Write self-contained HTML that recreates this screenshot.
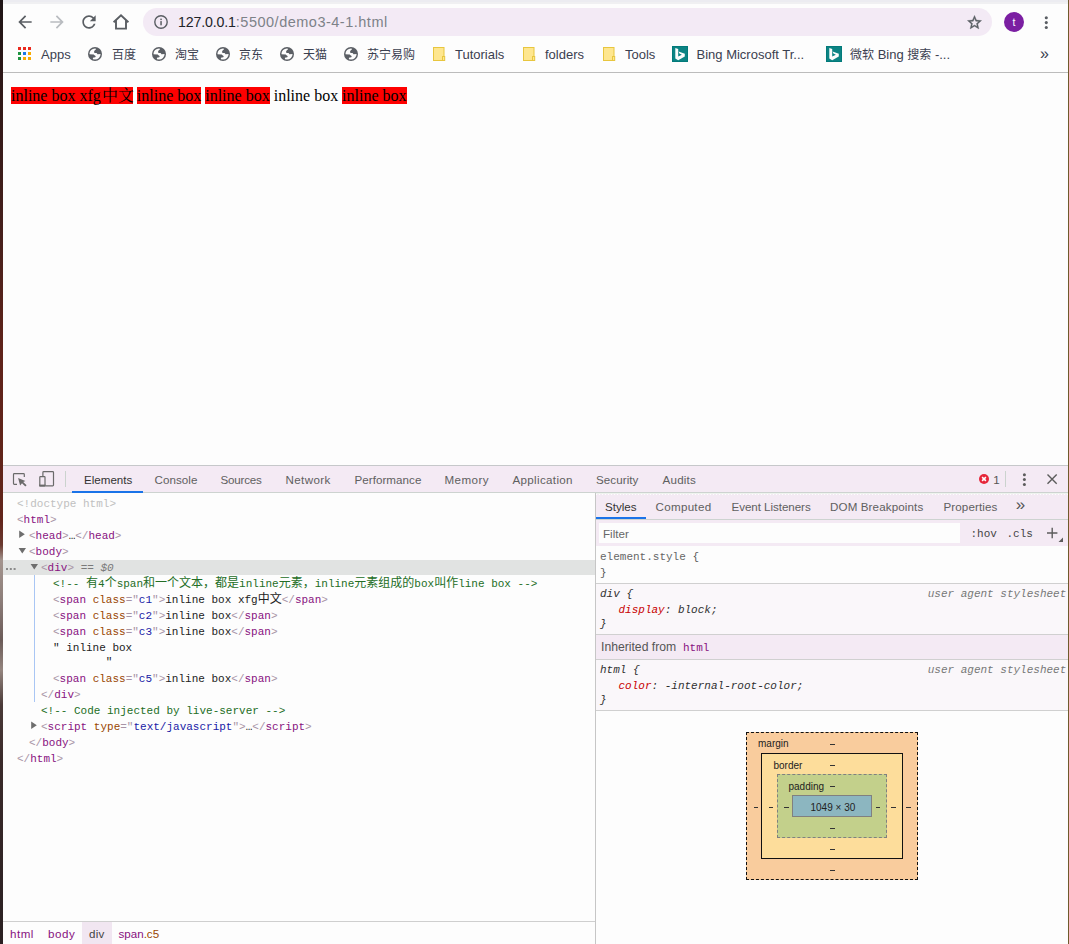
<!DOCTYPE html>
<html><head><meta charset="utf-8"><title>demo3-4-1</title>
<style>
html,body{margin:0;padding:0;overflow:hidden}
body{width:1069px;height:944px;overflow:hidden;background:#fdfdfd;position:relative;
 font-family:"Liberation Sans","Noto Sans CJK SC",sans-serif;font-size:12px;color:#333}
.a{position:absolute;white-space:nowrap}
svg{overflow:visible}
.ui{font-family:"Liberation Sans",sans-serif}
.mono{font-family:"Liberation Mono",monospace;font-size:11px}
.bm{position:absolute;top:47px;height:16px;line-height:16px;font-size:12px;color:#3b4050;white-space:nowrap}
.tab{position:absolute;top:472px;height:16px;line-height:16px;font-size:12px;color:#4a4a4a;white-space:nowrap}
.stab{position:absolute;top:499px;height:16px;line-height:16px;font-size:12px;color:#4a4a4a;white-space:nowrap}
.ln{position:absolute;height:16px;line-height:16px;white-space:nowrap;font-family:"Liberation Mono","Noto Sans CJK SC",monospace;font-size:11px;color:#222}
.t{color:#881280}.p{color:#a894a6}.an{color:#994500}.av{color:#1a1aa6}.cm{color:#236e25}.g{color:#c0c0c0}
.red{position:absolute;top:87px;height:17px;background:#fe0000}
.pg{position:absolute;top:87px;height:17px;line-height:17px;font-family:"Liberation Serif","Noto Serif CJK SC",serif;font-size:16px;color:#000;white-space:nowrap}
.sl{position:absolute;height:16px;line-height:16px;white-space:nowrap;font-family:"Liberation Mono",monospace;font-size:11px;color:#303030}
.it{font-style:italic}
.bx{position:absolute;box-sizing:border-box}
.bl{position:absolute;font-size:10px;line-height:12px;height:12px;color:#222;white-space:nowrap}
.cj{font-size:12px}
</style></head><body>
<div class="a" style="left:0;top:0;width:3px;height:944px;background:linear-gradient(180deg,#1e1517 0px,#2a1717 60px,#47201c 236px,#5f231a 350px,#62251b 520px,#6a3a30 545px,#a3948e 560px,#8d7e7a 600px,#6b5b58 640px,#94857f 670px,#4a3a38 705px,#3a2a2a 760px,#2a2022 944px)"></div>
<div class="a" style="left:1067.6px;top:0;width:1.4px;height:944px;background:#6f5b2c"></div>
<div class="a" style="left:3px;top:0;width:1065px;height:2px;background:#ececf1"></div>
<div class="a" style="left:3px;top:2px;width:1065px;height:2px;background:#f0f0f2"></div>
<svg class="a" style="left:14.9px;top:11.9px" width="20" height="20" viewBox="0 0 24 24"><path fill="#5a5e63" d="M20 11H7.83l5.59-5.59L12 4l-8 8 8 8 1.41-1.41L7.83 13H20v-2z"/></svg>
<svg class="a" style="left:47px;top:11.9px" width="20" height="20" viewBox="0 0 24 24"><path fill="#b9bcc0" d="M4 11h12.17l-5.59-5.59L12 4l8 8-8 8-1.41-1.41L16.17 13H4v-2z"/></svg>
<svg class="a" style="left:79.2px;top:11.7px" width="20" height="20" viewBox="0 0 24 24"><path fill="#5a5e63" d="M17.65 6.35C16.2 4.9 14.21 4 12 4c-4.42 0-7.99 3.58-7.99 8s3.57 8 7.99 8c3.73 0 6.84-2.55 7.73-6h-2.08c-.82 2.33-3.04 4-5.65 4-3.31 0-6-2.69-6-6s2.69-6 6-6c1.66 0 3.14.69 4.22 1.78L13 11h7V4l-2.35 2.35z"/></svg>
<svg class="a" style="left:111px;top:12px" width="20" height="20" viewBox="0 0 20 20"><path fill="none" stroke="#5a5e63" stroke-width="1.9" stroke-linejoin="miter" d="M2.6 10.2 L10 3.3 L17.4 10.2 M5 8.6 V16.6 H15 V8.6"/></svg>
<div class="a" style="left:143px;top:8px;width:849px;height:28px;border-radius:14px;background:#f3eaf5"></div>
<svg class="a" style="left:153px;top:14px" width="16" height="16" viewBox="0 0 16 16"><circle cx="8" cy="8" r="6.2" fill="none" stroke="#5a5e63" stroke-width="1.4"/><rect x="7.3" y="7.1" width="1.5" height="4.2" fill="#5a5e63"/><rect x="7.3" y="4.6" width="1.5" height="1.5" fill="#5a5e63"/></svg>
<div class="a ui" style="left:178px;top:12px;height:20px;line-height:20px;font-size:14.5px;letter-spacing:0.5px;color:#7d8288"><span style="color:#222428;font-size:14.2px;letter-spacing:-0.15px">127.0.0.1</span>:5500/demo3-4-1.html</div>
<svg class="a" style="left:965.6px;top:14px" width="17" height="17" viewBox="0 0 24 24"><path fill="#5a5e63" stroke="#5a5e63" stroke-width="0.5" d="M22 9.24l-7.19-.62L12 2 9.19 8.63 2 9.24l5.46 4.73L5.82 21 12 17.27 18.18 21l-1.63-7.03L22 9.24zM12 15.4l-3.76 2.27 1-4.28-3.32-2.88 4.38-.38L12 6.1l1.71 4.04 4.38.38-3.32 2.88 1 4.28L12 15.4z"/></svg>
<div class="a" style="left:1004px;top:12px;width:20px;height:20px;border-radius:10px;background:#7b1fa2"></div>
<div class="a ui" style="left:1004px;top:12px;width:20px;height:20px;line-height:20px;text-align:center;font-size:10.5px;color:#fff">t</div>
<svg class="a" style="left:1043px;top:14px" width="7" height="16" viewBox="0 0 7 16"><circle cx="3.3" cy="3.7" r="1.55" fill="#5a5e63"/><circle cx="3.3" cy="8.6" r="1.55" fill="#5a5e63"/><circle cx="3.3" cy="13.5" r="1.55" fill="#5a5e63"/></svg>
<svg class="a" style="left:18px;top:47px" width="13" height="13" viewBox="0 0 13 13" shape-rendering="crispEdges"><rect x="0" y="0" width="3" height="3" fill="#ea2a1e"/><rect x="5" y="0" width="3" height="3" fill="#ea2a1e"/><rect x="10" y="0" width="3" height="3" fill="#ea2a1e"/><rect x="0" y="5" width="3" height="3" fill="#1e9440"/><rect x="5" y="5" width="3" height="3" fill="#1a78ea"/><rect x="10" y="5" width="3" height="3" fill="#f9ab00"/><rect x="0" y="10" width="3" height="3" fill="#1e9440"/><rect x="5" y="10" width="3" height="3" fill="#f9ab00"/><rect x="10" y="10" width="3" height="3" fill="#f9ab00"/></svg>
<div class="bm" style="left:41px;font-size:13px">Apps</div>
<svg class="a" style="left:88px;top:47px" width="14" height="14" viewBox="0 0 14 14"><circle cx="7" cy="7" r="7" fill="#5b5f65"/><path fill="#fdfdfd" style="clip-path:circle(5.55px at 7px 7px)" d="M0 7.2 L5.8 7.4 Q6.1 8 6.5 8.3 Q7.4 8.7 7.6 9.2 Q7.8 10 7.2 10.3 Q6 10.4 4.9 10.8 L4.9 14 H14 V7.1 L9.4 7.2 Q9.2 6.4 8.5 6.1 L6.6 5.9 Q6 5.5 6.1 4.5 Q6.6 3.2 7.9 2.5 L7.8 0 H0 Z"/></svg>
<div class="bm" style="left:112px">百度</div>
<svg class="a" style="left:152px;top:47px" width="14" height="14" viewBox="0 0 14 14"><circle cx="7" cy="7" r="7" fill="#5b5f65"/><path fill="#fdfdfd" style="clip-path:circle(5.55px at 7px 7px)" d="M0 7.2 L5.8 7.4 Q6.1 8 6.5 8.3 Q7.4 8.7 7.6 9.2 Q7.8 10 7.2 10.3 Q6 10.4 4.9 10.8 L4.9 14 H14 V7.1 L9.4 7.2 Q9.2 6.4 8.5 6.1 L6.6 5.9 Q6 5.5 6.1 4.5 Q6.6 3.2 7.9 2.5 L7.8 0 H0 Z"/></svg>
<div class="bm" style="left:175px">淘宝</div>
<svg class="a" style="left:216px;top:47px" width="14" height="14" viewBox="0 0 14 14"><circle cx="7" cy="7" r="7" fill="#5b5f65"/><path fill="#fdfdfd" style="clip-path:circle(5.55px at 7px 7px)" d="M0 7.2 L5.8 7.4 Q6.1 8 6.5 8.3 Q7.4 8.7 7.6 9.2 Q7.8 10 7.2 10.3 Q6 10.4 4.9 10.8 L4.9 14 H14 V7.1 L9.4 7.2 Q9.2 6.4 8.5 6.1 L6.6 5.9 Q6 5.5 6.1 4.5 Q6.6 3.2 7.9 2.5 L7.8 0 H0 Z"/></svg>
<div class="bm" style="left:239px">京东</div>
<svg class="a" style="left:280px;top:47px" width="14" height="14" viewBox="0 0 14 14"><circle cx="7" cy="7" r="7" fill="#5b5f65"/><path fill="#fdfdfd" style="clip-path:circle(5.55px at 7px 7px)" d="M0 7.2 L5.8 7.4 Q6.1 8 6.5 8.3 Q7.4 8.7 7.6 9.2 Q7.8 10 7.2 10.3 Q6 10.4 4.9 10.8 L4.9 14 H14 V7.1 L9.4 7.2 Q9.2 6.4 8.5 6.1 L6.6 5.9 Q6 5.5 6.1 4.5 Q6.6 3.2 7.9 2.5 L7.8 0 H0 Z"/></svg>
<div class="bm" style="left:303px">天猫</div>
<svg class="a" style="left:344px;top:47px" width="14" height="14" viewBox="0 0 14 14"><circle cx="7" cy="7" r="7" fill="#5b5f65"/><path fill="#fdfdfd" style="clip-path:circle(5.55px at 7px 7px)" d="M0 7.2 L5.8 7.4 Q6.1 8 6.5 8.3 Q7.4 8.7 7.6 9.2 Q7.8 10 7.2 10.3 Q6 10.4 4.9 10.8 L4.9 14 H14 V7.1 L9.4 7.2 Q9.2 6.4 8.5 6.1 L6.6 5.9 Q6 5.5 6.1 4.5 Q6.6 3.2 7.9 2.5 L7.8 0 H0 Z"/></svg>
<div class="bm" style="left:367px">苏宁易购</div>
<svg class="a" style="left:433px;top:47px" width="13" height="15" viewBox="0 0 13 15"><rect x="0.5" y="0.5" width="10.5" height="13" fill="#fee68f" stroke="#e8c63e" stroke-width="1"/><rect x="9.5" y="9.5" width="2.2" height="4" fill="#fee68f" stroke="#e8c63e" stroke-width="1"/></svg>
<div class="bm" style="left:455px;font-size:13px">Tutorials</div>
<svg class="a" style="left:523px;top:47px" width="13" height="15" viewBox="0 0 13 15"><rect x="0.5" y="0.5" width="10.5" height="13" fill="#fee68f" stroke="#e8c63e" stroke-width="1"/><rect x="9.5" y="9.5" width="2.2" height="4" fill="#fee68f" stroke="#e8c63e" stroke-width="1"/></svg>
<div class="bm" style="left:545px;font-size:13px">folders</div>
<svg class="a" style="left:603px;top:47px" width="13" height="15" viewBox="0 0 13 15"><rect x="0.5" y="0.5" width="10.5" height="13" fill="#fee68f" stroke="#e8c63e" stroke-width="1"/><rect x="9.5" y="9.5" width="2.2" height="4" fill="#fee68f" stroke="#e8c63e" stroke-width="1"/></svg>
<div class="bm" style="left:625px;font-size:13px">Tools</div>
<svg class="a" style="left:672px;top:46px" width="16" height="16" viewBox="0 0 16 16"><rect x="0" y="0" width="16" height="16" fill="#0c8484"/><rect x="0.5" y="0.5" width="15" height="15" fill="none" stroke="#027a7a"/><path fill="#fdfdfd" d="M3.3 2 L6.2 3 V10.6 L9.9 8.8 L7.4 7.6 L6.6 5.4 L12.8 7.7 V10.5 L6.2 14.2 L3.3 12.5 Z"/></svg>
<div class="bm" style="left:696.5px;font-size:13px">Bing Microsoft Tr...</div>
<svg class="a" style="left:826px;top:46px" width="16" height="16" viewBox="0 0 16 16"><rect x="0" y="0" width="16" height="16" fill="#0c8484"/><rect x="0.5" y="0.5" width="15" height="15" fill="none" stroke="#027a7a"/><path fill="#fdfdfd" d="M3.3 2 L6.2 3 V10.6 L9.9 8.8 L7.4 7.6 L6.6 5.4 L12.8 7.7 V10.5 L6.2 14.2 L3.3 12.5 Z"/></svg>
<div class="bm" style="left:850px;font-size:13px"><span class="cj">微软</span> Bing <span class="cj">搜索</span> -...</div>
<div class="bm" style="left:1040px;font-size:16px;top:45.6px">&raquo;</div>
<div class="a" style="left:3px;top:72px;width:1065px;height:1px;background:#bcbcbc"></div>
<div class="red" style="left:11px;width:122px"></div>
<div class="red" style="left:137px;width:64px"></div>
<div class="red" style="left:205px;width:65px"></div>
<div class="red" style="left:342px;width:65px"></div>
<div class="pg" style="left:11px">inline box xfg</div>
<div class="pg" style="left:102px">中文</div>
<div class="pg" style="left:136.8px">inline box</div>
<div class="pg" style="left:205.2px">inline box</div>
<div class="pg" style="left:273.7px">inline box</div>
<div class="pg" style="left:342.1px">inline box</div>
<div class="a" style="left:3px;top:465px;width:1065px;height:1px;background:#c6c8ca"></div>
<div class="a" style="left:3px;top:466px;width:1065px;height:26px;background:#f4eaf4"></div>
<div class="a" style="left:3px;top:492px;width:1065px;height:1px;background:#cdd3d0"></div>
<svg class="a" style="left:12px;top:472px" width="16" height="16" viewBox="0 0 16 16"><path fill="none" stroke="#6a6a6a" stroke-width="1.2" d="M5 12.3 H2.3 Q1.5 12.3 1.5 11.5 V2.4 Q1.5 1.6 2.3 1.6 H11.5 Q12.3 1.6 12.3 2.4 V5"/><path fill="#6a6a6a" d="M6.1 6.1 L13.4 8.9 L11.2 9.9 L14.6 13.2 L13.3 14.5 L10 11.2 L8.1 13.4 Z"/></svg>
<svg class="a" style="left:38px;top:470px" width="18" height="18" viewBox="0 0 18 18"><path fill="none" stroke="#6a6a6a" stroke-width="1.2" d="M4.9 6.1 V2.4 Q4.9 1.6 5.7 1.6 H14.7 Q15.5 1.6 15.5 2.4 V15.1 Q15.5 15.9 14.7 15.9 H7.6"/><rect x="1.8" y="6.7" width="5.2" height="9.2" rx="0.6" fill="none" stroke="#6a6a6a" stroke-width="1.2"/><rect x="1.2" y="14.6" width="6.4" height="1.9" fill="#6a6a6a"/></svg>
<div class="a" style="left:65px;top:471px;width:1px;height:16px;background:#cbd3ce"></div>
<div class="a" style="left:72px;top:491px;width:71px;height:2px;background:#1a73e8"></div>
<div class="tab" style="left:84px;font-size:11.6px;letter-spacing:0px;color:#333">Elements</div>
<div class="tab" style="left:154.5px;font-size:11.6px;letter-spacing:0.05px;color:#606060">Console</div>
<div class="tab" style="left:220.5px;font-size:11.6px;letter-spacing:-0.2px;color:#606060">Sources</div>
<div class="tab" style="left:285.5px;font-size:11.6px;letter-spacing:0.4px;color:#606060">Network</div>
<div class="tab" style="left:354.5px;font-size:11.6px;letter-spacing:0.05px;color:#606060">Performance</div>
<div class="tab" style="left:444.5px;font-size:11.6px;letter-spacing:0.45px;color:#606060">Memory</div>
<div class="tab" style="left:512.5px;font-size:11.6px;letter-spacing:0.33px;color:#606060">Application</div>
<div class="tab" style="left:596px;font-size:11.6px;letter-spacing:0.07px;color:#606060">Security</div>
<div class="tab" style="left:662.5px;font-size:11.6px;letter-spacing:0.23px;color:#606060">Audits</div>
<svg class="a" style="left:979px;top:474px" width="10" height="10" viewBox="0 0 10 10"><circle cx="5" cy="5" r="5" fill="#e6273a"/><path stroke="#fff" stroke-width="1.5" d="M3.1 3.1 L6.9 6.9 M6.9 3.1 L3.1 6.9"/></svg>
<div class="tab" style="left:993.3px;font-size:11.6px;color:#555">1</div>
<div class="a" style="left:1005px;top:471px;width:1px;height:16px;background:#cbd3ce"></div>
<svg class="a" style="left:1021px;top:472px" width="7" height="15" viewBox="0 0 7 15"><circle cx="3.4" cy="2.7" r="1.5" fill="#5c5c5c"/><circle cx="3.4" cy="7.5" r="1.5" fill="#5c5c5c"/><circle cx="3.4" cy="12.4" r="1.5" fill="#5c5c5c"/></svg>
<svg class="a" style="left:1046px;top:473px" width="12" height="12" viewBox="0 0 12 12"><path stroke="#5c5c5c" stroke-width="1.4" d="M1.5 1.4 L10.7 10.7 M10.7 1.4 L1.5 10.7"/></svg>
<div class="a" style="left:3px;top:560px;width:592px;height:14.8px;background:#e1e3e2"></div>
<div class="a" style="left:34px;top:575px;width:1px;height:126.5px;background:#a9c6f4"></div>
<div class="ln" style="left:17px;top:495.8px;"><span class="g">&lt;!doctype html&gt;</span></div>
<div class="ln" style="left:17px;top:511.8px;"><span class="p">&lt;</span><span class="t">html</span><span class="p">&gt;</span></div>
<svg class="a" style="left:18.2px;top:530px" width="8" height="9" viewBox="0 0 8 9"><path fill="#6e6e6e" d="M1.2 0.6 L6.8 4.3 L1.2 8 Z"/></svg>
<div class="ln" style="left:29px;top:527.8px;"><span class="p">&lt;</span><span class="t">head</span><span class="p">&gt;</span>…<span class="p">&lt;/</span><span class="t">head</span><span class="p">&gt;</span></div>
<svg class="a" style="left:18.2px;top:547px" width="9" height="8" viewBox="0 0 9 8"><path fill="#6e6e6e" d="M0.6 1 L8 1 L4.3 6.6 Z"/></svg>
<div class="ln" style="left:29px;top:543.8px;"><span class="p">&lt;</span><span class="t">body</span><span class="p">&gt;</span></div>
<div class="a" style="left:5.8px;top:567.8px;width:2px;height:2px;background:#8a8a8a;box-shadow:3.8px 0 0 #8a8a8a,7.6px 0 0 #8a8a8a"></div>
<svg class="a" style="left:29.8px;top:563px" width="9" height="8" viewBox="0 0 9 8"><path fill="#6e6e6e" d="M0.6 1 L8 1 L4.3 6.6 Z"/></svg>
<div class="ln" style="left:41px;top:559.8px;"><span class="p">&lt;</span><span class="t">div</span><span class="p">&gt;</span><span style="color:#7a7a7a"> == <i>$0</i></span></div>
<div class="ln" style="left:53px;top:575.8px;"><span class="cm">&lt;!-- <span class="cj">有</span>4<span class="cj">个</span>span<span class="cj">和一个文本，都是</span>inline<span class="cj">元素，</span>inline<span class="cj">元素组成的</span>box<span class="cj">叫作</span>line box --&gt;</span></div>
<div class="ln" style="left:53px;top:591.8px;"><span class="p">&lt;</span><span class="t">span</span> <span class="an">class</span><span class="p">="</span><span class="av">c1</span><span class="p">"</span><span class="p">&gt;</span>inline box xfg<span class="cj">中文</span><span class="p">&lt;/</span><span class="t">span</span><span class="p">&gt;</span></div>
<div class="ln" style="left:53px;top:607.8px;"><span class="p">&lt;</span><span class="t">span</span> <span class="an">class</span><span class="p">="</span><span class="av">c2</span><span class="p">"</span><span class="p">&gt;</span>inline box<span class="p">&lt;/</span><span class="t">span</span><span class="p">&gt;</span></div>
<div class="ln" style="left:53px;top:623.8px;"><span class="p">&lt;</span><span class="t">span</span> <span class="an">class</span><span class="p">="</span><span class="av">c3</span><span class="p">"</span><span class="p">&gt;</span>inline box<span class="p">&lt;/</span><span class="t">span</span><span class="p">&gt;</span></div>
<div class="ln" style="left:53px;top:639.8px;">" inline box</div>
<div class="ln" style="left:53px;top:654.0px;">&nbsp;&nbsp;&nbsp;&nbsp;&nbsp;&nbsp;&nbsp;&nbsp;"</div>
<div class="ln" style="left:53px;top:670.6999999999999px;"><span class="p">&lt;</span><span class="t">span</span> <span class="an">class</span><span class="p">="</span><span class="av">c5</span><span class="p">"</span><span class="p">&gt;</span>inline box<span class="p">&lt;/</span><span class="t">span</span><span class="p">&gt;</span></div>
<div class="ln" style="left:41px;top:686.6999999999999px;"><span class="p">&lt;/</span><span class="t">div</span><span class="p">&gt;</span></div>
<div class="ln" style="left:41px;top:702.6999999999999px;"><span class="cm">&lt;!-- Code injected by live-server --&gt;</span></div>
<svg class="a" style="left:30.2px;top:720.9px" width="8" height="9" viewBox="0 0 8 9"><path fill="#6e6e6e" d="M1.2 0.6 L6.8 4.3 L1.2 8 Z"/></svg>
<div class="ln" style="left:41px;top:718.6999999999999px;"><span class="p">&lt;</span><span class="t">script</span> <span class="an">type</span><span class="p">="</span><span class="av">text/javascript</span><span class="p">"&gt;</span>…<span class="p">&lt;/</span><span class="t">script</span><span class="p">&gt;</span></div>
<div class="ln" style="left:29px;top:734.6999999999999px;"><span class="p">&lt;/</span><span class="t">body</span><span class="p">&gt;</span></div>
<div class="ln" style="left:17px;top:750.6999999999999px;"><span class="p">&lt;/</span><span class="t">html</span><span class="p">&gt;</span></div>
<div class="a" style="left:3px;top:921px;width:592px;height:1px;background:#cfcfcf"></div>
<div class="a" style="left:82px;top:922px;width:30px;height:22px;background:#f1e6f1"></div>
<div class="a ui" style="left:10px;top:926px;height:16px;line-height:16px;font-size:11.6px;letter-spacing:0.5px;color:#881280">html</div>
<div class="a ui" style="left:48px;top:926px;height:16px;line-height:16px;font-size:11.6px;letter-spacing:0.55px;color:#881280">body</div>
<div class="a ui" style="left:89px;top:926px;height:16px;line-height:16px;font-size:11.6px;letter-spacing:0.3px;color:#444">div</div>
<div class="a ui" style="left:118.5px;top:926px;height:16px;line-height:16px;font-size:11.6px;color:#881280">span<span style="color:#994500">.c5</span></div>
<div class="a" style="left:595px;top:493px;width:1px;height:451px;background:#c6c6c6"></div>
<!--styles--><div class="a" style="left:596px;top:493px;width:472px;height:26px;background:#f4eaf4"></div>
<div class="a" style="left:596px;top:519px;width:472px;height:1px;background:#cdd3d0"></div>
<div class="a" style="left:596px;top:493px;width:472px;height:1px;background:#eef3ee"></div>
<div class="a" style="left:596px;top:494px;width:472px;height:1px;background:repeating-linear-gradient(90deg,#fdfdfd 0 1.5px,#f4eaf4 1.5px 3px)"></div>
<div class="a" style="left:596px;top:517px;width:50px;height:2px;background:#1a73e8"></div>
<div class="a" style="left:596px;top:520px;width:472px;height:26px;background:#f4eaf4"></div>
<div class="a" style="left:599px;top:523px;width:361px;height:20px;background:#fdfdfd"></div>
<div class="a ui" style="left:603px;top:525.6px;height:16px;line-height:16px;font-size:11.6px;color:#666">Filter</div>
<div class="sl" style="left:970.5px;top:525.7px;color:#444">:hov</div>
<div class="sl" style="left:1006.5px;top:525.7px;color:#444">.cls</div>
<svg class="a" style="left:1046px;top:527px" width="18" height="16" viewBox="0 0 18 16"><path stroke="#5c5c5c" stroke-width="1.4" d="M1 6 H11.4 M6.2 0.8 V11.2"/><path fill="#5c5c5c" d="M17 10.5 V15 H12.5 Z"/></svg>
<div class="stab" style="left:605px;font-size:11.6px;letter-spacing:0px;color:#333">Styles</div>
<div class="stab" style="left:655.5px;font-size:11.6px;letter-spacing:0.3px;color:#606060">Computed</div>
<div class="stab" style="left:731.5px;font-size:11.6px;letter-spacing:-0.05px;color:#606060">Event Listeners</div>
<div class="stab" style="left:830px;font-size:11.6px;letter-spacing:0.12px;color:#606060">DOM Breakpoints</div>
<div class="stab" style="left:943.5px;font-size:11.6px;letter-spacing:0.1px;color:#606060">Properties</div>
<div class="stab" style="left:1015.8px;font-size:17px;top:496.5px;color:#555">&raquo;</div>
<div class="a" style="left:596px;top:583px;width:472px;height:1px;background:#d0d0d0"></div>
<div class="a" style="left:596px;top:584px;width:472px;height:50px;background:#faf7fa"></div>
<div class="a" style="left:596px;top:634px;width:472px;height:1px;background:#d0d0d0"></div>
<div class="a" style="left:596px;top:635px;width:472px;height:24px;background:#f4eaf4"></div>
<div class="a" style="left:596px;top:659px;width:472px;height:1px;background:#d0d0d0"></div>
<div class="a" style="left:596px;top:660px;width:472px;height:50px;background:#faf7fa"></div>
<div class="a" style="left:596px;top:710px;width:472px;height:1px;background:#d0d0d0"></div>
<div class="sl" style="left:600px;top:549px;color:#5a5a5a"><span style="color:#666">element.style</span> {</div>
<div class="sl" style="left:600px;top:565px;color:#5a5a5a">}</div>
<div class="sl" style="left:600px;top:585.5px;font-style:italic">div {</div>
<div class="sl" style="left:927.7px;top:585.5px;font-style:italic;color:#777">user agent stylesheet</div>
<div class="sl" style="left:618.5px;top:601.7px;font-style:italic"><span style="color:#c80000">display</span>: block;</div>
<div class="sl" style="left:600px;top:616px;font-style:italic">}</div>
<div class="a ui" style="left:601px;top:639px;height:16px;line-height:16px;font-size:12.2px;color:#555">Inherited from</div>
<div class="sl" style="left:683px;top:639.5px;"><span class="t">html</span></div>
<div class="sl" style="left:600px;top:661.5px;font-style:italic">html {</div>
<div class="sl" style="left:927.7px;top:661.5px;font-style:italic;color:#777">user agent stylesheet</div>
<div class="sl" style="left:618.5px;top:677.7px;font-style:italic"><span style="color:#c80000">color</span>: -internal-root-color;</div>
<div class="sl" style="left:600px;top:692px;font-style:italic">}</div>
<div class="bx" style="left:746px;top:732px;width:172px;height:148px;background:#f9cc9d;border:1px dashed #111"></div>
<div class="bx" style="left:761px;top:753px;width:142px;height:106px;background:#fddd9b;border:1px solid #111"></div>
<div class="bx" style="left:777px;top:774px;width:110px;height:64px;background:#c3d08b;border:1px dashed #808080"></div>
<div class="bx" style="left:792px;top:795px;width:80px;height:22px;background:#8cb6c0;border:1px solid #808080"></div>
<div class="bl" style="left:758px;top:737.8px">margin</div>
<div class="bl" style="left:773.5px;top:759.6px">border</div>
<div class="bl" style="left:788.5px;top:780.6px">padding</div>
<div class="bl" style="left:810.5px;top:801.6px">1049 × 30</div>
<div class="a" style="left:830.0px;top:743.8px;width:4.6px;height:1px;background:#333"></div>
<div class="a" style="left:830.0px;top:765.0px;width:4.6px;height:1px;background:#333"></div>
<div class="a" style="left:830.0px;top:785.9px;width:4.6px;height:1px;background:#333"></div>
<div class="a" style="left:830.0px;top:828.0px;width:4.6px;height:1px;background:#333"></div>
<div class="a" style="left:830.0px;top:848.9px;width:4.6px;height:1px;background:#333"></div>
<div class="a" style="left:830.0px;top:870.1px;width:4.6px;height:1px;background:#333"></div>
<div class="a" style="left:753.7px;top:806.8px;width:4.6px;height:1px;background:#333"></div>
<div class="a" style="left:768.9000000000001px;top:806.8px;width:4.6px;height:1px;background:#333"></div>
<div class="a" style="left:784.1px;top:806.8px;width:4.6px;height:1px;background:#333"></div>
<div class="a" style="left:875.7px;top:806.8px;width:4.6px;height:1px;background:#333"></div>
<div class="a" style="left:891.1px;top:806.8px;width:4.6px;height:1px;background:#333"></div>
<div class="a" style="left:906.4000000000001px;top:806.8px;width:4.6px;height:1px;background:#333"></div>
</body></html>
